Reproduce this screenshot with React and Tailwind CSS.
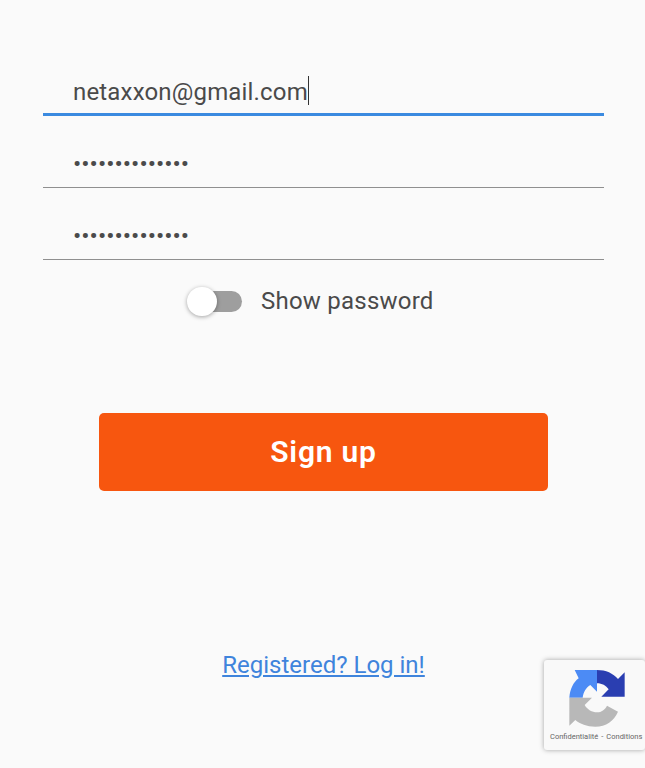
import React from 'react';

const Field = ({ value, focused }) => (
  <div className={`flex h-[72px] items-end border-b ${focused ? 'border-b-[3px] border-[#3a8ae0]' : 'border-[#8f8f8f]'}`}>
    {focused ? (
      <div className="flex h-[48px] items-center pl-[30px] text-[24px] tracking-[0.17px] text-[#4a4a4a]">
        <span className="pt-[5px]">{value}</span>
        <span className="mt-[2px] h-[29px] w-px bg-[#333]" />
      </div>
    ) : (
      <input
        type="password"
        readOnly
        value={value}
        className="h-[48px] w-full bg-transparent pl-[30px] text-[24.6px] text-[#4a4a4a] outline-none"
      />
    )}
  </div>
);

const RecaptchaLogo = () => (
  <svg viewBox="0 0 210 198" className="h-[66px] w-[70px]">
    <path d="M38 15 H105 V80 L85 60 C72 68 64 82 62 98 H22 C24 72 34 52 50 40 Z" fill="#4c8bf5" />
    <path d="M105 15 C132 15 153 25 168 42 L188 22 V95 H118 L140 73 C132 62 120 55 105 55 Z" fill="#2a3eb1" />
    <path d="M22 98 H90 L68 120 C76 134 90 142 105 142 C119 142 129 134 135 122 L168 140 C156 168 132 185 100 185 C74 185 54 177 40 165 L22 182 Z" fill="#b8b8b8" />
  </svg>
);

export default function App() {
  return (
    <div className="relative h-[768px] w-[645px] overflow-hidden bg-[#fafafa] font-['Roboto',sans-serif]">
      <div className="flex flex-col pt-[44px]">
        <div className="ml-[43px] flex w-[561px] flex-col">
          <Field value="netaxxon@gmail.com" focused />
          <Field value="11111111111111" />
          <Field value="11111111111111" />
        </div>

        <div className="ml-[187px] mt-[23px] flex h-[36px] items-center">
          <div className="relative ml-[2px] h-[21px] w-[53px] rounded-full bg-[#9e9e9e]">
            <div className="absolute left-[-2px] top-[-4px] h-[29px] w-[30px] rounded-full bg-white shadow-[0_1px_4px_rgba(0,0,0,0.35)]" />
          </div>
          <span className="ml-[19px] text-[24px] tracking-[0.23px] text-[#4a4a4a]">Show password</span>
        </div>

        <button className="ml-[99px] mt-[94px] flex h-[78px] w-[449px] items-center justify-center rounded-[5px] bg-[#f7560f] pb-[2px] text-[30px] font-semibold tracking-[0.8px] text-white">
          Sign up
        </button>

        <div className="ml-[2px] mt-[156px] text-center">
          <a href="#" className="text-[24px] text-[#3f84dc] underline">Registered? Log in!</a>
        </div>
      </div>

      <div className="absolute left-[544px] top-[660px] flex h-[90px] w-[101px] flex-col rounded-[3px] bg-[#f9f9f9] shadow-[0_0_5px_rgba(0,0,0,0.35)]">
        <div className="ml-[18px] mt-[5px]"><RecaptchaLogo /></div>
        <div className="ml-[6px] mt-[1px] flex gap-[3px] whitespace-nowrap text-[7.5px] leading-[10px] text-[#666]">
          <span>Confidentialité</span><span>-</span><span>Conditions</span>
        </div>
      </div>
    </div>
  );
}
